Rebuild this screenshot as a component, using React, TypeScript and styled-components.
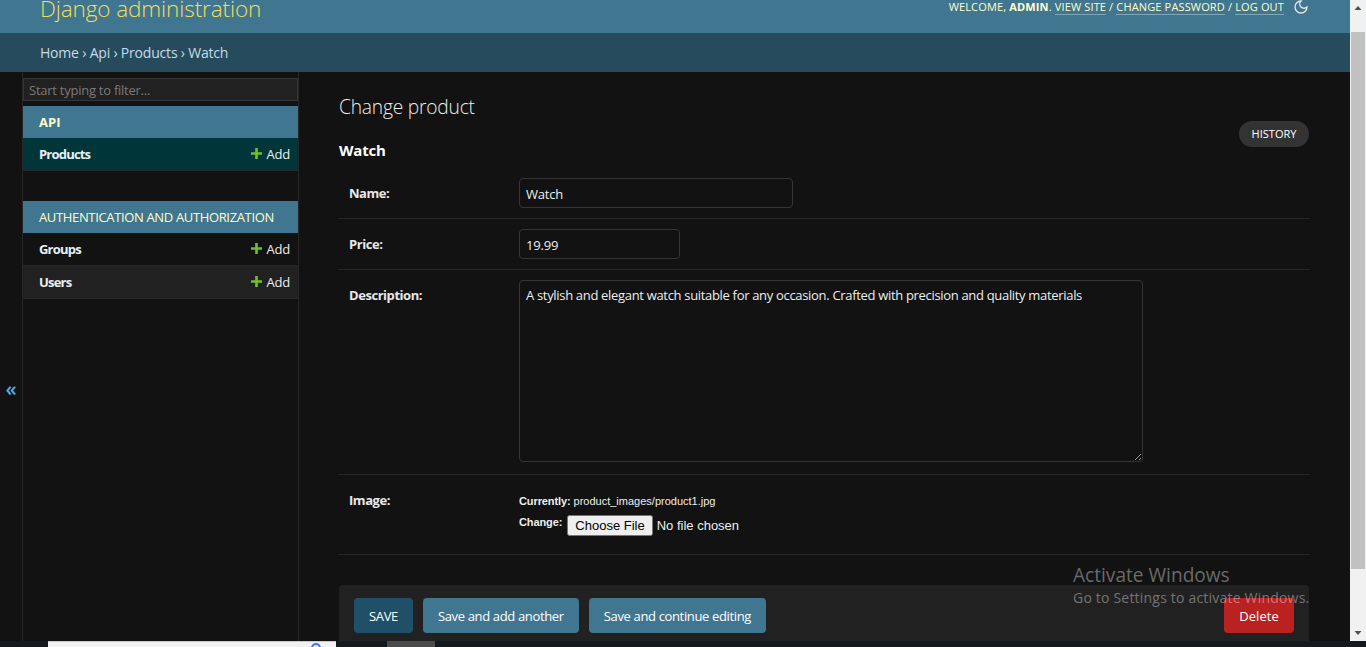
import React from "react";
import styled, { createGlobalStyle } from "styled-components";

const GlobalStyle = createGlobalStyle`
  html, body {
    margin: 0;
    height: 100%;
    overflow: hidden;
    background: #121212;
  }
  body {
    font-family: "Open Sans", "Noto Sans", sans-serif;
    font-size: 13px;
    letter-spacing: -0.2px;
    color: #eeeeee;
  }
  * { box-sizing: border-box; }
`;

const Screen = styled.div`
  position: relative;
  width: 1366px;
  height: 647px;
  overflow: hidden;
  display: flex;
  flex-direction: column;
`;

const Viewport = styled.div`
  flex: 1;
  min-height: 0;
  display: flex;
`;

const Page = styled.div`
  flex: 1;
  min-width: 0;
  display: flex;
  flex-direction: column;
`;

const Header = styled.header`
  height: 33px;
  background: #417690;
  display: flex;
  justify-content: space-between;
  overflow: hidden;
  padding: 0 41px 0 40px;
`;

const Brand = styled.div`
  margin-top: -7px;
  font-size: 22.5px;
  font-weight: 300;
  line-height: 32px;
  letter-spacing: -0.1px;
  color: #f5dd5d;
  white-space: nowrap;
`;

const UserTools = styled.div`
  display: flex;
  align-items: flex-start;
  font-size: 11px;
  line-height: 14px;
  letter-spacing: 0.15px;
  color: #ffffcc;
  text-transform: uppercase;
  white-space: pre;
`;

const UserLink = styled.a`
  border-bottom: 1px solid rgba(255, 255, 255, 0.35);
`;

const ThemeToggle = styled.span`
  margin-left: 9px;
  margin-top: -1px;
  color: #e8e8e8;
  display: flex;
`;

const Breadcrumbs = styled.nav`
  height: 39px;
  display: flex;
  align-items: center;
  padding-left: 40px;
  background: #264b5d;
  color: #c4dce8;
  font-size: 14px;
`;

const Body = styled.div`
  flex: 1;
  min-height: 0;
  display: flex;
  overflow: hidden;
`;

const Toggle = styled.div`
  width: 23px;
  flex: none;
  border-right: 1px solid #272727;
  display: flex;
  align-items: center;
  justify-content: center;
  padding-top: 64px;
  color: #5aa7e8;
  font-size: 20px;
  font-weight: 600;
`;

const Sidebar = styled.aside`
  width: 276px;
  flex: none;
  border-right: 1px solid #272727;
  padding-top: 6px;
`;

const Filter = styled.input`
  display: block;
  width: 275px;
  height: 23px;
  padding: 0 5px;
  margin-bottom: 5px;
  border: 1px solid #353535;
  background: #212121;
  color: #eeeeee;
  font: inherit;
  letter-spacing: -0.25px;
  &::placeholder {
    color: #7a7a7a;
    opacity: 1;
  }
`;

const AppGroup = styled.section`
  margin-bottom: 30px;
`;

const Caption = styled.div<{ $bold?: boolean }>`
  height: 32px;
  display: flex;
  align-items: center;
  padding-left: 16px;
  background: #417690;
  color: #ffffcc;
  font-size: 13px;
  letter-spacing: ${(p) => (p.$bold ? "0" : "-0.35px")};
  font-weight: ${(p) => (p.$bold ? 700 : 400)};
  text-transform: uppercase;
  white-space: nowrap;
`;

const ModelRow = styled.div<{ $tone?: "selected" | "alt" }>`
  height: 33px;
  display: flex;
  align-items: center;
  justify-content: space-between;
  padding: 0 8px 0 16px;
  border-bottom: 1px solid #272727;
  background: ${(p) =>
    p.$tone === "selected" ? "#00363a" : p.$tone === "alt" ? "#212121" : "#121212"};
`;

const ModelName = styled.span`
  font-weight: 700;
  letter-spacing: -0.8px;
  color: #e8f0f4;
`;

const AddLink = styled.span`
  display: flex;
  align-items: center;
  gap: 4px;
  color: #eeeeee;
`;

const PlusIcon = styled.svg`
  width: 11px;
  height: 11px;
  margin-top: -2px;
  fill: #70bf2b;
`;

const Content = styled.main`
  flex: 1;
  min-width: 0;
  padding: 20px 41px 0 40px;
`;

const TitleBar = styled.div`
  display: flex;
  justify-content: space-between;
`;

const Title = styled.h1`
  margin: 0;
  font-size: 19.2px;
  line-height: 30px;
  font-weight: 300;
  color: #eeeeee;
`;

const HistoryButton = styled.a`
  height: 26px;
  width: 70px;
  margin-top: 29px;
  padding-bottom: 2px;
  border-radius: 13px;
  background: #333333;
  color: #ffffff;
  font-size: 11px;
  letter-spacing: 0;
  display: flex;
  align-items: center;
  justify-content: center;
`;

const ObjectName = styled.h2`
  margin: -9px 0 6px;
  font-size: 15px;
  line-height: 24px;
  font-weight: 700;
  color: #ffffff;
`;

const Row = styled.div`
  display: flex;
  padding: 10px;
  border-bottom: 1px solid #272727;
`;

const Label = styled.label`
  width: 170px;
  flex: none;
  padding-top: 5px;
  font-weight: 700;
  letter-spacing: -0.45px;
  line-height: 20px;
  color: #e8e8e8;
`;

const TextInput = styled.input<{ $width: number }>`
  display: block;
  width: ${(p) => p.$width}px;
  height: 30px;
  padding: 1px 6px 0;
  background: #121212;
  border: 1px solid #353535;
  border-radius: 4px;
  color: #eeeeee;
  font: inherit;
  letter-spacing: -0.2px;
`;

const TextArea = styled.textarea`
  display: block;
  width: 624px;
  height: 182px;
  margin-bottom: 2px;
  padding: 5px 6px;
  background: #121212;
  border: 1px solid #353535;
  border-radius: 4px;
  color: #eeeeee;
  font: inherit;
  letter-spacing: -0.32px;
  line-height: 18px;
`;

const FileField = styled.div`
  padding-bottom: 8px;
  font-family: "Liberation Sans", Arial, sans-serif;
  font-size: 11px;
  letter-spacing: 0;
  color: #eeeeee;
`;

const FileLine = styled.div`
  display: flex;
  align-items: flex-start;
  gap: 5px;
  line-height: 14px;
  strong {
    letter-spacing: -0.1px;
  }
`;

const CurrentLine = styled(FileLine)`
  gap: 3px;
  padding-top: 9px;
  margin-bottom: 7px;
`;

const FileInput = styled.input`
  font-family: "Liberation Sans", Arial, sans-serif;
  font-size: 13px;
  color: #eeeeee;
  height: 21px;
`;

const SubmitRow = styled.div`
  margin-top: 30px;
  height: 70px;
  padding: 13px 15px;
  display: flex;
  gap: 10px;
  background: #212121;
  border-radius: 4px;
`;

const ActionButton = styled.a<{ $variant?: "save" | "delete" }>`
  height: 35px;
  padding: 0 15px;
  display: flex;
  align-items: center;
  border-radius: 4px;
  color: #ffffff;
  letter-spacing: ${(p) => (p.$variant === "delete" ? "0.1px" : "-0.35px")};
  background: ${(p) =>
    p.$variant === "save" ? "#205067" : p.$variant === "delete" ? "#ba2121" : "#417690"};
  margin-left: ${(p) => (p.$variant === "delete" ? "auto" : "0")};
`;

const Scrollbar = styled.div`
  width: 16px;
  flex: none;
  background: #f1f1f1;
  display: flex;
  flex-direction: column;
  align-items: center;
`;

const ScrollArrow = styled.svg`
  width: 16px;
  height: 16px;
  flex: none;
  fill: #505050;
`;

const ScrollThumb = styled.div`
  width: 14px;
  height: 537px;
  margin-top: 16px;
  margin-bottom: auto;
  background: #c1c1c1;
`;

const Taskbar = styled.div`
  height: 6px;
  flex: none;
  display: flex;
  background: #14191d;
`;

const TaskbarSearch = styled.div`
  width: 288px;
  margin-left: 48px;
  padding-right: 15px;
  display: flex;
  justify-content: flex-end;
  background: #f1f1f1;
  border-top: 1px solid #c8c8c8;
  overflow: hidden;
`;

const SearchGlyph = styled.svg`
  width: 10px;
  height: 10px;
  margin-top: 1px;
  fill: none;
  stroke: #2f7ae5;
  stroke-width: 2;
`;

const TaskbarActive = styled.div`
  width: 48px;
  margin-left: 51px;
  background: #4a4a4a;
`;

const Watermark = styled.div`
  position: absolute;
  left: 1073px;
  top: 563px;
  color: rgba(255, 255, 255, 0.38);
  pointer-events: none;
  white-space: nowrap;
`;

const WatermarkTitle = styled.div`
  font-size: 19.1px;
  line-height: 24px;
  letter-spacing: 0;
`;

const WatermarkHint = styled.div`
  font-size: 14px;
  line-height: 22px;
  letter-spacing: 0.2px;
`;

const models = [
  { name: "Groups" },
  { name: "Users", tone: "alt" as const },
];

function Plus() {
  return (
    <PlusIcon viewBox="0 0 10 10">
      <path d="M3.8 0h2.4v3.8H10v2.4H6.2V10H3.8V6.2H0V3.8h3.8z" />
    </PlusIcon>
  );
}

export default function App() {
  return (
    <Screen>
      <GlobalStyle />
      <Viewport>
        <Page>
          <Header>
            <Brand>Django administration</Brand>
            <UserTools>
              Welcome, <strong>admin</strong>. <UserLink>View site</UserLink> /{" "}
              <UserLink>Change password</UserLink> / <UserLink>Log out</UserLink>
              <ThemeToggle>
                <svg width="16" height="16" viewBox="0 0 24 24" fill="none" stroke="currentColor" strokeWidth="2">
                  <path d="M12 3a6 6 0 0 0 9 9 9 9 0 1 1-9-9Z" />
                </svg>
              </ThemeToggle>
            </UserTools>
          </Header>
          <Breadcrumbs>Home › Api › Products › Watch</Breadcrumbs>
          <Body>
            <Toggle>«</Toggle>
            <Sidebar>
              <Filter placeholder="Start typing to filter..." />
              <AppGroup>
                <Caption $bold>API</Caption>
                <ModelRow $tone="selected">
                  <ModelName>Products</ModelName>
                  <AddLink>
                    <Plus />
                    Add
                  </AddLink>
                </ModelRow>
              </AppGroup>
              <AppGroup>
                <Caption>Authentication and Authorization</Caption>
                {models.map((m) => (
                  <ModelRow key={m.name} $tone={m.tone}>
                    <ModelName>{m.name}</ModelName>
                    <AddLink>
                      <Plus />
                      Add
                    </AddLink>
                  </ModelRow>
                ))}
              </AppGroup>
            </Sidebar>
            <Content>
              <TitleBar>
                <Title>Change product</Title>
                <HistoryButton>HISTORY</HistoryButton>
              </TitleBar>
              <ObjectName>Watch</ObjectName>
              <Row>
                <Label>Name:</Label>
                <TextInput $width={274} defaultValue="Watch" />
              </Row>
              <Row>
                <Label>Price:</Label>
                <TextInput $width={161} defaultValue="19.99" />
              </Row>
              <Row>
                <Label>Description:</Label>
                <TextArea defaultValue="A stylish and elegant watch suitable for any occasion. Crafted with precision and quality materials" />
              </Row>
              <Row>
                <Label>Image:</Label>
                <FileField>
                  <CurrentLine>
                    <strong>Currently:</strong> product_images/product1.jpg
                  </CurrentLine>
                  <FileLine>
                    <strong>Change:</strong>
                    <FileInput type="file" />
                  </FileLine>
                </FileField>
              </Row>
              <SubmitRow>
                <ActionButton $variant="save">SAVE</ActionButton>
                <ActionButton>Save and add another</ActionButton>
                <ActionButton>Save and continue editing</ActionButton>
                <ActionButton $variant="delete">Delete</ActionButton>
              </SubmitRow>
            </Content>
          </Body>
        </Page>
        <Scrollbar>
          <ScrollArrow viewBox="0 0 16 16">
            <path d="M4.5 10 8 6l3.5 4z" />
          </ScrollArrow>
          <ScrollThumb />
          <ScrollArrow viewBox="0 0 16 16">
            <path d="M4.5 6 8 10l3.5-4z" />
          </ScrollArrow>
        </Scrollbar>
      </Viewport>
      <Taskbar>
        <TaskbarSearch>
          <SearchGlyph viewBox="0 0 10 10">
            <circle cx="5" cy="5" r="4" />
          </SearchGlyph>
        </TaskbarSearch>
        <TaskbarActive />
      </Taskbar>
      <Watermark>
        <WatermarkTitle>Activate Windows</WatermarkTitle>
        <WatermarkHint>Go to Settings to activate Windows.</WatermarkHint>
      </Watermark>
    </Screen>
  );
}
